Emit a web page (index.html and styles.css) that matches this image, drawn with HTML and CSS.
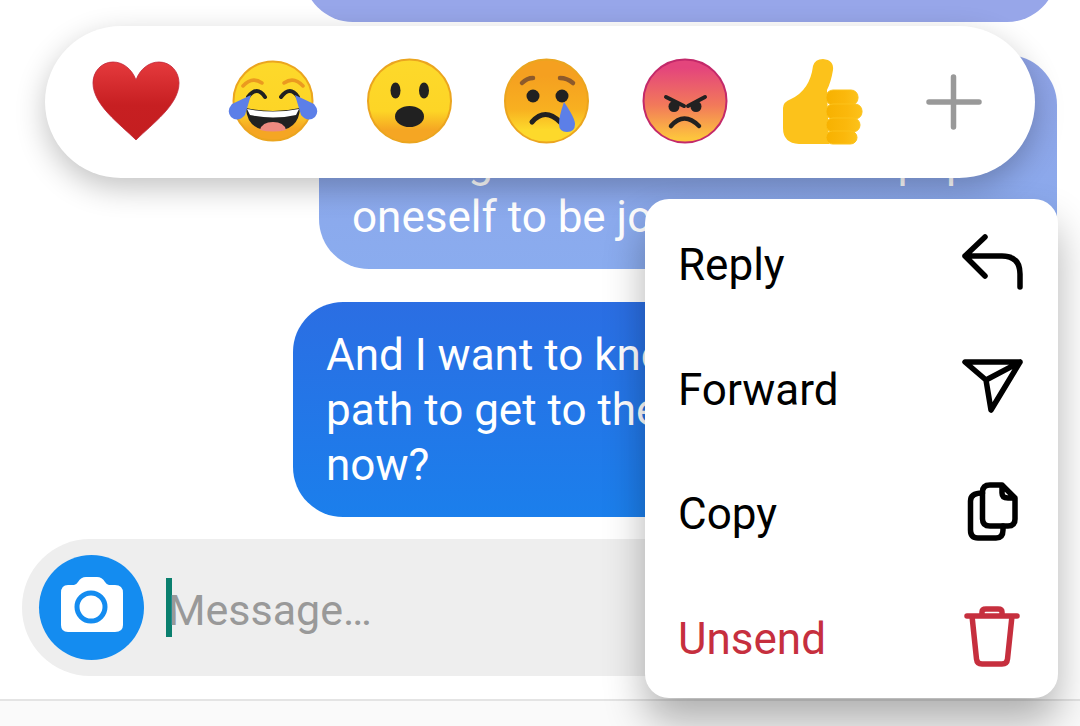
FILE: index.html
```html
<!DOCTYPE html>
<html lang="en">

<head>
    <meta charset="UTF-8">
    <meta name="viewport" content="width=device-width, initial-scale=1.0">
    <title>Messages</title>
    <link rel="stylesheet" href="styles.css">
</head>

<body>
    <div class="screen">
        <div class="chat">
            <div class="bubble top"></div>
            <div class="bubble faded">&nbsp;<br>Feeling all of the time it is a pap<br>oneself to be jo</div>
            <div class="bubble solid">And I want to kno<br>path to get to the<br>now?</div>
            <div class="input">
                <div class="camera">
                    <svg width="105" height="105" viewBox="0 0 105 105">
                        <path fill="#fff" d="M29 30H35Q37 30 39 27Q42 22 47 22H58Q63 22 66 27Q68 30 70 30H76Q84 30 84 38V70Q84 77 76 77H29Q22 77 22 70V38Q22 30 29 30Z" />
                        <circle cx="52" cy="52" r="14" fill="#fff" stroke="#148cf0" stroke-width="5" />
                    </svg>
                </div>
                <span class="caret"></span>
                <span class="placeholder">Message…</span>
            </div>
        </div>
        <div class="bottom"></div>

        <!-- reactions -->
        <div class="reactions">
            <svg class="emoji" viewBox="0 0 88 88">
                <defs>
                    <linearGradient id="heart" x1="0" y1="0" x2="0" y2="1">
                        <stop offset="0" stop-color="#e53a3d" />
                        <stop offset=".55" stop-color="#c71f22" />
                        <stop offset="1" stop-color="#c41e20" />
                    </linearGradient>
                    <linearGradient id="yellowDown" x1="0" y1="0" x2="0" y2="1">
                        <stop offset="0" stop-color="#fdd92b" />
                        <stop offset=".62" stop-color="#fdd526" />
                        <stop offset=".85" stop-color="#f5a623" />
                    </linearGradient>
                    <linearGradient id="yellowUp" x1="0" y1="0" x2="0" y2="1">
                        <stop offset=".2" stop-color="#f5a020" />
                        <stop offset=".6" stop-color="#f8b020" />
                        <stop offset=".85" stop-color="#fdd92b" />
                    </linearGradient>
                    <linearGradient id="angry" x1="0" y1="0" x2="0" y2="1">
                        <stop offset=".1" stop-color="#e4457c" />
                        <stop offset=".55" stop-color="#f2795a" />
                        <stop offset=".95" stop-color="#fdc53d" />
                    </linearGradient>
                    <linearGradient id="finger" x1="0" y1="0" x2="1" y2="0">
                        <stop offset="0" stop-color="#f7b100" />
                        <stop offset=".6" stop-color="#fbb80c" />
                        <stop offset="1" stop-color="#fcc21b" />
                    </linearGradient>
                </defs>
                <path fill="url(#heart)" stroke="#c2273a" stroke-width=".8" d="M44 22C40 11 31 4 21 4C9 4 1 14 1 25C1 47 28 66 44 82C60 66 87 47 87 25C87 14 79 4 67 4C57 4 48 11 44 22Z" />
            </svg>
            <svg class="emoji" viewBox="0 0 88 88">
                <circle cx="44" cy="43" r="39.500" fill="url(#yellowDown)" stroke="#eba51f" stroke-width="2" />
                <path class="brow" d="M14 28Q23 18 33 25M55 25Q65 18 74 28" />
                <path class="smile" d="M19 39Q28 27 36 39M52 39Q61 27 69 39" />
                <path fill="#212121" d="M17 50Q44 56 71 50Q70 73 44 73Q18 73 17 50Z" />
                <path fill="#fff" d="M18 51Q44 56 70 51L67 57Q44 62 21 57Z" />
                <path fill="#ee8a80" d="M31 72Q33 64 44 64Q55 64 57 72Q44 75 31 72Z" />
                <path fill="#5c7fe8" d="M22 37L3 46Q-3 53 2 59Q9 65 16 57ZM66 37L85 46Q91 53 86 59Q79 65 72 57Z" />
            </svg>
            <svg class="emoji" viewBox="0 0 88 88">
                <circle cx="43.500" cy="43" r="41.500" fill="url(#yellowDown)" stroke="#eba51f" stroke-width="2" />
                <ellipse cx="29.500" cy="32.500" rx="5" ry="8" fill="#212121" />
                <ellipse cx="58" cy="32.500" rx="5" ry="8" fill="#212121" />
                <ellipse cx="43.500" cy="58.500" rx="14.500" ry="10.500" fill="#212121" />
            </svg>
            <svg class="emoji" viewBox="0 0 88 88">
                <circle cx="43.500" cy="43" r="41.500" fill="url(#yellowUp)" stroke="#eba51f" stroke-width="2" />
                <path fill="none" stroke="#8d5a2b" stroke-width="4.500" stroke-linecap="round" d="M19 25Q24 20 30 20M57 20Q64 20 70 25" />
                <circle cx="30" cy="38" r="6.500" fill="#212121" />
                <circle cx="59" cy="38" r="6.500" fill="#212121" />
                <path fill="none" stroke="#212121" stroke-width="5" stroke-linecap="round" d="M29 64Q42 49 57 64" />
                <path fill="#5c7fe8" d="M61 44Q72 60 72 66Q72 74 64 74Q56 74 56 66Q56 58 61 44Z" />
            </svg>
            <svg class="emoji" viewBox="0 0 88 88">
                <circle cx="45" cy="43" r="41.500" fill="url(#angry)" stroke="#c3296a" stroke-width="2" />
                <path fill="none" stroke="#212121" stroke-width="4" stroke-linecap="round" d="M26 39L44 48M65 39L48 48" />
                <circle cx="34" cy="48.500" r="5.500" fill="#212121" />
                <circle cx="56" cy="48.500" r="5.500" fill="#212121" />
                <path fill="none" stroke="#212121" stroke-width="4.500" stroke-linecap="round" d="M31 68Q44 53 59 68" />
            </svg>
            <svg class="emoji" viewBox="0 0 88 88">
                <path fill="#fcc21b" d="M36 8Q38 1 46 1Q57 2 56 12Q54 24 50 32L52 86H22Q6 85 6 70V50Q6 44 14 41Q33 32 36 8Z" />
                <rect class="finger" x="49" y="32" width="32" height="15" rx="7" />
                <rect class="finger" x="49" y="46" width="36" height="15" rx="7" />
                <rect class="finger" x="49" y="60" width="34" height="14" rx="7" />
                <rect class="finger" x="49" y="73" width="31" height="13" rx="6.500" />
            </svg>
            <svg class="plus" viewBox="0 0 56 56">
                <path fill="none" stroke="#999" stroke-width="5.500" stroke-linecap="round" d="M27.500 3V53M3 28H53" />
            </svg>
        </div>

        <!-- context menu -->
        <ul class="menu">
            <li>
                <span>Reply</span>
                <svg class="icon" viewBox="0 0 60 60">
                    <path d="M23 3L3 22L23 42M3 22H40Q58 22 58 40V53" />
                </svg>
            </li>
            <li>
                <span>Forward</span>
                <svg class="icon" viewBox="0 0 60 60">
                    <path d="M3 4H58L29 52L24 22ZM24 22L58 4" />
                </svg>
            </li>
            <li>
                <span>Copy</span>
                <svg class="icon" viewBox="0 0 60 60">
                    <path d="M28 2H40L53 15V36Q53 43 46 43H28Q20.500 43 20.500 36V9Q20.500 2 28 2ZM40 2V10Q40 15 46 15H53" />
                    <path d="M20.500 10Q8.500 10 8.500 18V47Q8.500 55 16 55H34Q41 55 41 47V43" />
                </svg>
            </li>
            <li class="danger">
                <span>Unsend</span>
                <svg class="icon" viewBox="0 0 60 60">
                    <path d="M5 9H55M10 9L14.500 52Q15 57 20 57H40Q45 57 45.500 52L50 9M20 8V5Q20 2 24 2H36Q40 2 40 5V8" />
                </svg>
            </li>
        </ul>
    </div>
</body>

</html>
```

FILE: styles.css
```css
* {
    margin: 0;
    padding: 0;
    box-sizing: border-box;
    list-style: none;
}

body {
    background-color: #fff;
    font-family: Roboto, "Liberation Sans", sans-serif;
}

.screen {
    width: 1080px;
    height: 726px;
    position: relative;
    overflow: hidden;
    display: flex;
    flex-direction: column;
}

.chat {
    flex: 1;
    min-height: 0;
    padding: 0 23px 23px 22px;
    display: flex;
    flex-direction: column;
    justify-content: flex-end;
    align-items: flex-end;
}

.bubble {
    flex-shrink: 0;
    padding: 25px 33px;
    border-radius: 50px;
    color: #fff;
    font-size: 44px;
    line-height: 55px;
    white-space: nowrap;
}

.bubble.top {
    width: 754px;
    height: 100px;
    margin-bottom: 33px;
    background-color: #97a6e9;
}

.bubble.faded {
    width: 738px;
    padding-bottom: 24px;
    margin-bottom: 33px;
    background: linear-gradient(#8fa3e6, #8aacef);
}

.bubble.solid {
    width: 764px;
    padding-top: 26px;
    padding-bottom: 24px;
    margin-bottom: 22px;
    background: linear-gradient(#2b6ee3, #1b7fec);
}

.input {
    flex-shrink: 0;
    width: 100%;
    height: 137px;
    padding-left: 17px;
    border-radius: 68px;
    background-color: #eee;
    display: flex;
    align-items: center;
}

.camera {
    width: 105px;
    height: 105px;
    margin-right: 22px;
    border-radius: 50%;
    background-color: #148cf0;
    display: flex;
}

.caret {
    width: 6px;
    height: 59px;
    margin-right: -4px;
    background-color: #0a7f6e;
}

.placeholder {
    padding-top: 5px;
    color: #999;
    font-size: 43px;
}

.bottom {
    height: 27px;
    flex-shrink: 0;
    border-top: 2px solid #e4e4e4;
    background-color: #fafafa;
}

.reactions {
    position: absolute;
    left: 45px;
    top: 26px;
    width: 990px;
    height: 152px;
    padding-left: 47px;
    border-radius: 76px;
    background-color: #fff;
    box-shadow: 0 10px 30px rgba(0, 0, 0, .24);
    display: flex;
    align-items: center;
    gap: 49px;
}

.emoji {
    width: 88px;
    height: 88px;
    overflow: visible;
}

.brow {
    fill: none;
    stroke: #eb9a1f;
    stroke-width: 3.5;
    stroke-linecap: round;
}

.smile {
    fill: none;
    stroke: #212121;
    stroke-width: 4;
    stroke-linecap: round;
}

.finger {
    fill: url(#finger);
    stroke: #fcc21b;
    stroke-width: 1;
}

.plus {
    width: 56px;
    height: 56px;
    margin-left: 12px;
}

.menu {
    position: absolute;
    left: 645px;
    top: 199px;
    width: 413px;
    height: 499px;
    padding: 4px 36px 0 33px;
    border-radius: 24px;
    background-color: #fff;
    box-shadow: 0 24px 40px rgba(0, 0, 0, .3);
}

.menu li {
    height: 124.500px;
    display: flex;
    align-items: center;
    justify-content: space-between;
    color: #000;
    font-size: 44px;
}

.menu .danger {
    color: #c62f3e;
}

.icon {
    width: 60px;
    height: 60px;
    margin-top: -3px;
    overflow: visible;
    fill: none;
    stroke: currentColor;
    stroke-width: 5.5;
    stroke-linecap: round;
    stroke-linejoin: round;
}
```
